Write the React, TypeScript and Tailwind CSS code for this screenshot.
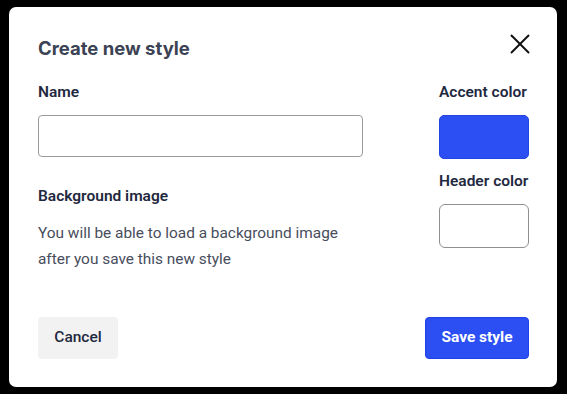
export default function App() {
  return (
    <div className="flex min-h-[394px] w-full bg-black px-[9px] pt-[7px] pb-[7px] font-['Roboto',sans-serif]">
      <div className="flex w-[548px] flex-col rounded-[7px] bg-white pt-[29px] pr-[28px] pb-[28px] pl-[29px]">
        <div className="flex items-start justify-between">
          <h2 className="font-['Inter',sans-serif] text-[18.5px] leading-[24px] font-bold text-[#3b4253]">
            Create new style
          </h2>
          <button type="button" className="mt-[-2px] mr-[-1px] text-[#111]">
            <svg width="20" height="20" viewBox="0 0 20 20" fill="none" stroke="currentColor" strokeWidth="1.9" strokeLinecap="round">
              <line x1="1.5" y1="1.5" x2="18.5" y2="18.5" />
              <line x1="18.5" y1="1.5" x2="1.5" y2="18.5" />
            </svg>
          </button>
        </div>

        <div className="mt-[22px] flex justify-between">
          <div className="flex w-[325px] flex-col">
            <label className="text-[15.5px] leading-[20px] font-semibold text-[#1f2940]">Name</label>
            <input
              type="text"
              className="mt-[13px] h-[42px] w-[325px] rounded-[4px] border border-[#9a9a9a] px-3 text-[15px] outline-none"
            />
            <p className="mt-[29px] text-[15.5px] leading-[20px] font-semibold text-[#1f2940]">
              Background image
            </p>
            <p className="mt-[14px] text-[15.4px] leading-[26px] text-[#474d5c]">
              You will be able to load a background image
              <br />
              after you save this new style
            </p>
          </div>

          <div className="flex w-[90px] flex-col">
            <label className="text-[15.5px] leading-[20px] font-semibold whitespace-nowrap text-[#1f2940]">
              Accent color
            </label>
            <div className="mt-[13px] h-[44px] w-[90px] rounded-[5px] border border-[#2446e0] bg-[#2b4ff3]" />
            <label className="mt-[12px] text-[15.5px] leading-[20px] font-semibold whitespace-nowrap text-[#1f2940]">
              Header color
            </label>
            <div className="mt-[13px] h-[44px] w-[90px] rounded-[6px] border border-[#8f8f8f] bg-white" />
          </div>
        </div>

        <div className="mt-auto flex items-center justify-between">
          <button
            type="button"
            className="h-[42px] w-[80px] rounded-[4px] bg-[#f2f2f2] text-[15.5px] font-medium text-[#1f2940]"
          >
            Cancel
          </button>
          <button
            type="button"
            className="h-[42px] w-[104px] rounded-[4px] border border-[#2040e8] bg-[#2b4ff3] text-[15.5px] font-bold text-white"
          >
            Save style
          </button>
        </div>
      </div>
    </div>
  );
}
